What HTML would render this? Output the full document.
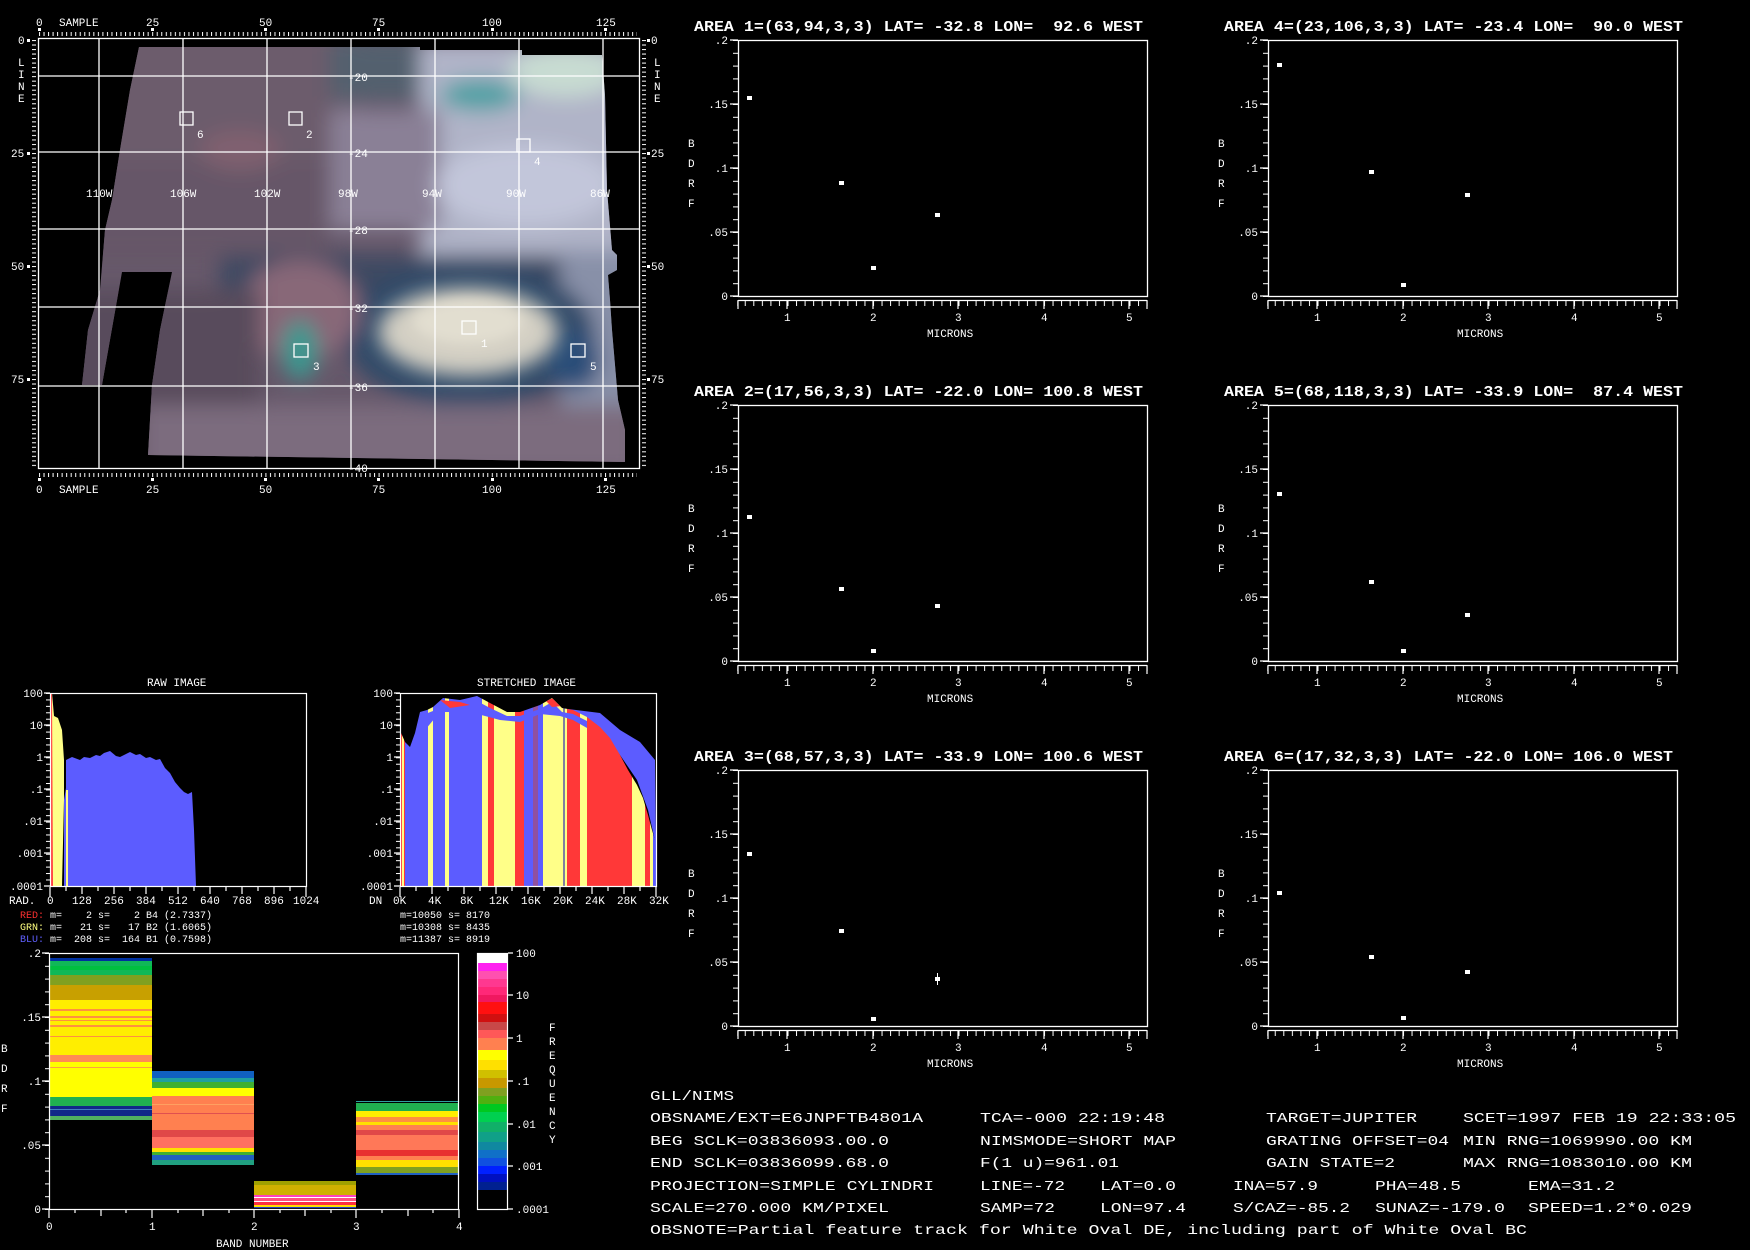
<!DOCTYPE html>
<html><head><meta charset="utf-8"><style>
html,body{margin:0;padding:0;background:#000;}
svg{display:block;}
text{font-family:"Liberation Mono",monospace;fill:#fff;white-space:pre;}
.s{font-size:11px;}
.t{font-size:15px;font-weight:bold;}
.b{font-size:13px;}
</style></head><body>
<svg width="1750" height="1250" viewBox="0 0 1750 1250" xmlns="http://www.w3.org/2000/svg">
<defs>
<pattern id="tkx" x="39" y="0" width="4.528" height="10" patternUnits="userSpaceOnUse"><rect x="0" y="0" width="1" height="10" fill="#fff"/></pattern>
<pattern id="tky" x="0" y="40" width="10" height="4.52" patternUnits="userSpaceOnUse"><rect x="0" y="0" width="10" height="1" fill="#fff"/></pattern>
<pattern id="pty" x="0" y="40" width="10" height="12.8" patternUnits="userSpaceOnUse"><rect x="0" y="0" width="10" height="1" fill="#fff"/></pattern>
<pattern id="ptx" x="702" y="0" width="8.55" height="10" patternUnits="userSpaceOnUse"><rect x="0" y="0" width="1" height="10" fill="#fff"/></pattern>
<pattern id="hty" x="0" y="693" width="10" height="6.43" patternUnits="userSpaceOnUse"><rect x="0" y="0" width="10" height="1" fill="#fff"/></pattern>
<pattern id="bty" x="0" y="953" width="10" height="12.8" patternUnits="userSpaceOnUse"><rect x="0" y="0" width="10" height="1" fill="#fff"/></pattern>
<filter id="bl" filterUnits="userSpaceOnUse" x="0" y="0" width="700" height="520"><feGaussianBlur stdDeviation="10"/></filter>
<filter id="bl2" filterUnits="userSpaceOnUse" x="0" y="0" width="700" height="520"><feGaussianBlur stdDeviation="6"/></filter>
<clipPath id="mapclip"><polygon points="139,47 420,47 420,50 522,50 522,55 602,55 605,95 607,190 612,250 617,255 617,270 608,275 610,300 612,330 618,400 625,430 625,462 148,455 152,385 160,330 172,272 122,272 102,385 82,385 88,330 100,290 105,230 112,200 120,150 130,90"/></clipPath>
<clipPath id="envclip"><polygon points="400,693 401,733 405,742 410,747 415,733 420,712 427,710 433,707 443,698 460,700 477,696 490,703 507,712 520,712 540,705 552,698 562,708 573,710 587,717 600,727 610,738 620,755 628,770 637,785 643,798 648,815 652,830 655,840 657,815 657,887 400,887"/></clipPath>
</defs>
<rect width="1750" height="1250" fill="#000"/>

<!-- ===== MAP ===== -->
<g clip-path="url(#mapclip)">
 <rect x="70" y="40" width="570" height="430" fill="#66586a"/>
 <g filter="url(#bl)">
  <rect x="60" y="30" width="300" height="130" fill="#6c5c6c"/>
  <rect x="330" y="40" width="130" height="60" fill="#52606e"/>
  <rect x="420" y="40" width="220" height="230" fill="#b0b4c8"/>
  <ellipse cx="565" cy="72" rx="55" ry="25" fill="#c8dcd2"/>
  <ellipse cx="480" cy="95" rx="40" ry="16" fill="#50a0a4"/>
  <rect x="330" y="110" width="110" height="120" fill="#8a8096"/>
  <ellipse cx="525" cy="185" rx="90" ry="40" fill="#c2c6da"/>
  <rect x="60" y="160" width="270" height="100" fill="#665668"/>
  <ellipse cx="240" cy="150" rx="40" ry="20" fill="#806070"/>
  <rect x="220" y="255" width="420" height="40" fill="#3c4a62"/>
  <rect x="560" y="250" width="80" height="220" fill="#8890a8"/>
  <ellipse cx="470" cy="335" rx="125" ry="72" fill="#2e4868"/>
  <ellipse cx="300" cy="310" rx="60" ry="50" fill="#886878"/>
  <ellipse cx="300" cy="350" rx="18" ry="30" fill="#3a9890"/>
  <rect x="60" y="290" width="200" height="180" fill="#584c5c"/>
  <rect x="140" y="405" width="500" height="70" fill="#7c6c7e"/>
  <ellipse cx="575" cy="360" rx="25" ry="30" fill="#2a4e78"/>
 </g>
 <ellipse cx="468" cy="332" rx="90" ry="44" fill="#d4d0c4" filter="url(#bl)"/>
 <ellipse cx="468" cy="322" rx="55" ry="22" fill="#e2ded0" filter="url(#bl2)"/>
</g>
<!-- grid -->
<g stroke="#fff" stroke-width="1.3" fill="none">
 <rect x="38.5" y="38.5" width="601" height="430"/>
 <path d="M99 38V468M183 38V468M267 38V468M351 38V468M435 38V468M519 38V468M603 38V468M38 76H640M38 152H640M38 229H640M38 307H640M38 386H640"/>
 <rect x="180" y="112" width="13" height="13"/>
 <rect x="289" y="112" width="13" height="13"/>
 <rect x="517" y="139" width="13" height="13"/>
 <rect x="462" y="321" width="14" height="13"/>
 <rect x="294" y="344" width="14" height="13"/>
 <rect x="571" y="344" width="14" height="13"/>
</g>
<!-- rulers -->
<rect x="39" y="32" width="598" height="4" fill="url(#tkx)"/>
<rect x="39" y="473" width="598" height="4" fill="url(#tkx)"/>
<rect x="32" y="40" width="4" height="428" fill="url(#tky)"/>
<rect x="642" y="40" width="4" height="428" fill="url(#tky)"/>
<g fill="#fff">
 <rect x="38" y="28" width="3" height="3"/><rect x="151" y="28" width="3" height="3"/><rect x="264" y="28" width="3" height="3"/><rect x="377" y="28" width="3" height="3"/><rect x="491" y="28" width="3" height="3"/><rect x="604" y="28" width="3" height="3"/>
 <rect x="38" y="478" width="3" height="3"/><rect x="151" y="478" width="3" height="3"/><rect x="264" y="478" width="3" height="3"/><rect x="377" y="478" width="3" height="3"/><rect x="491" y="478" width="3" height="3"/><rect x="604" y="478" width="3" height="3"/>
 <rect x="27" y="39" width="3" height="3"/><rect x="27" y="152" width="3" height="3"/><rect x="27" y="265" width="3" height="3"/><rect x="27" y="378" width="3" height="3"/>
 <rect x="647" y="39" width="3" height="3"/><rect x="647" y="152" width="3" height="3"/><rect x="647" y="265" width="3" height="3"/><rect x="647" y="378" width="3" height="3"/>
</g>
<g class="s">
 <text x="36" y="26">0</text><text x="59" y="26">SAMPLE</text><text x="146" y="26">25</text><text x="259" y="26">50</text><text x="372" y="26">75</text><text x="482" y="26">100</text><text x="596" y="26">125</text>
 <text x="36" y="493">0</text><text x="59" y="493">SAMPLE</text><text x="146" y="493">25</text><text x="259" y="493">50</text><text x="372" y="493">75</text><text x="482" y="493">100</text><text x="596" y="493">125</text>
 <text x="18" y="44">0</text><text x="11" y="157">25</text><text x="11" y="270">50</text><text x="11" y="383">75</text>
 <text x="18" y="66">L</text><text x="18" y="78">I</text><text x="18" y="90">N</text><text x="18" y="102">E</text>
 <text x="651" y="44">0</text><text x="651" y="157">25</text><text x="651" y="270">50</text><text x="651" y="383">75</text>
 <text x="654" y="66">L</text><text x="654" y="78">I</text><text x="654" y="90">N</text><text x="654" y="102">E</text>
 <text x="348" y="81">-20</text><text x="348" y="157">-24</text><text x="348" y="234">-28</text><text x="348" y="312">-32</text><text x="348" y="391">-36</text><text x="348" y="472">-40</text>
 <text x="86" y="197">110W</text><text x="170" y="197">106W</text><text x="254" y="197">102W</text><text x="338" y="197">98W</text><text x="422" y="197">94W</text><text x="506" y="197">90W</text><text x="590" y="197">86W</text>
 <text x="197" y="138">6</text><text x="306" y="138">2</text><text x="534" y="165">4</text><text x="481" y="347">1</text><text x="313" y="370">3</text><text x="590" y="370">5</text>
</g>

<!-- ===== AREA PLOTS ===== -->
<g>
 <rect x="738.5" y="40.5" width="409" height="256" fill="none" stroke="#fff" stroke-width="1.3"/>
 <rect x="733" y="40" width="5" height="257" fill="url(#pty)"/>
 <path d="M730 40H738M730 104H738M730 168H738M730 232H738M730 296H738M738 300.5H1147" stroke="#fff" stroke-width="1.2"/>
 <rect x="737" y="301" width="411" height="5" fill="url(#ptx)"/>
 <path d="M787 300V309M873 300V309M958 300V309M1044 300V309M1129 300V309M738 300V309M1147 300V309" stroke="#fff" stroke-width="1.2"/>
 <g class="s">
  <text x="728" y="44" text-anchor="end">.2</text><text x="728" y="108" text-anchor="end">.15</text><text x="728" y="172" text-anchor="end">.1</text><text x="728" y="236" text-anchor="end">.05</text><text x="728" y="300" text-anchor="end">0</text>
  <text x="688" y="147">B</text><text x="688" y="167">D</text><text x="688" y="187">R</text><text x="688" y="207">F</text>
  <text x="784" y="321">1</text><text x="870" y="321">2</text><text x="955" y="321">3</text><text x="1041" y="321">4</text><text x="1126" y="321">5</text>
  <text x="927" y="337">MICRONS</text>
 </g>
</g>
<g transform="translate(530,0)">
 <rect x="738.5" y="40.5" width="409" height="256" fill="none" stroke="#fff" stroke-width="1.3"/>
 <rect x="733" y="40" width="5" height="257" fill="url(#pty)"/>
 <path d="M730 40H738M730 104H738M730 168H738M730 232H738M730 296H738M738 300.5H1147" stroke="#fff" stroke-width="1.2"/>
 <rect x="737" y="301" width="411" height="5" fill="url(#ptx)"/>
 <path d="M787 300V309M873 300V309M958 300V309M1044 300V309M1129 300V309M738 300V309M1147 300V309" stroke="#fff" stroke-width="1.2"/>
 <g class="s">
  <text x="728" y="44" text-anchor="end">.2</text><text x="728" y="108" text-anchor="end">.15</text><text x="728" y="172" text-anchor="end">.1</text><text x="728" y="236" text-anchor="end">.05</text><text x="728" y="300" text-anchor="end">0</text>
  <text x="688" y="147">B</text><text x="688" y="167">D</text><text x="688" y="187">R</text><text x="688" y="207">F</text>
  <text x="784" y="321">1</text><text x="870" y="321">2</text><text x="955" y="321">3</text><text x="1041" y="321">4</text><text x="1126" y="321">5</text>
  <text x="927" y="337">MICRONS</text>
 </g>
</g>
<g transform="translate(0,365)">
 <rect x="738.5" y="40.5" width="409" height="256" fill="none" stroke="#fff" stroke-width="1.3"/>
 <rect x="733" y="40" width="5" height="257" fill="url(#pty)"/>
 <path d="M730 40H738M730 104H738M730 168H738M730 232H738M730 296H738M738 300.5H1147" stroke="#fff" stroke-width="1.2"/>
 <rect x="737" y="301" width="411" height="5" fill="url(#ptx)"/>
 <path d="M787 300V309M873 300V309M958 300V309M1044 300V309M1129 300V309M738 300V309M1147 300V309" stroke="#fff" stroke-width="1.2"/>
 <g class="s">
  <text x="728" y="44" text-anchor="end">.2</text><text x="728" y="108" text-anchor="end">.15</text><text x="728" y="172" text-anchor="end">.1</text><text x="728" y="236" text-anchor="end">.05</text><text x="728" y="300" text-anchor="end">0</text>
  <text x="688" y="147">B</text><text x="688" y="167">D</text><text x="688" y="187">R</text><text x="688" y="207">F</text>
  <text x="784" y="321">1</text><text x="870" y="321">2</text><text x="955" y="321">3</text><text x="1041" y="321">4</text><text x="1126" y="321">5</text>
  <text x="927" y="337">MICRONS</text>
 </g>
</g>
<g transform="translate(530,365)">
 <rect x="738.5" y="40.5" width="409" height="256" fill="none" stroke="#fff" stroke-width="1.3"/>
 <rect x="733" y="40" width="5" height="257" fill="url(#pty)"/>
 <path d="M730 40H738M730 104H738M730 168H738M730 232H738M730 296H738M738 300.5H1147" stroke="#fff" stroke-width="1.2"/>
 <rect x="737" y="301" width="411" height="5" fill="url(#ptx)"/>
 <path d="M787 300V309M873 300V309M958 300V309M1044 300V309M1129 300V309M738 300V309M1147 300V309" stroke="#fff" stroke-width="1.2"/>
 <g class="s">
  <text x="728" y="44" text-anchor="end">.2</text><text x="728" y="108" text-anchor="end">.15</text><text x="728" y="172" text-anchor="end">.1</text><text x="728" y="236" text-anchor="end">.05</text><text x="728" y="300" text-anchor="end">0</text>
  <text x="688" y="147">B</text><text x="688" y="167">D</text><text x="688" y="187">R</text><text x="688" y="207">F</text>
  <text x="784" y="321">1</text><text x="870" y="321">2</text><text x="955" y="321">3</text><text x="1041" y="321">4</text><text x="1126" y="321">5</text>
  <text x="927" y="337">MICRONS</text>
 </g>
</g>
<g transform="translate(0,730)">
 <rect x="738.5" y="40.5" width="409" height="256" fill="none" stroke="#fff" stroke-width="1.3"/>
 <rect x="733" y="40" width="5" height="257" fill="url(#pty)"/>
 <path d="M730 40H738M730 104H738M730 168H738M730 232H738M730 296H738M738 300.5H1147" stroke="#fff" stroke-width="1.2"/>
 <rect x="737" y="301" width="411" height="5" fill="url(#ptx)"/>
 <path d="M787 300V309M873 300V309M958 300V309M1044 300V309M1129 300V309M738 300V309M1147 300V309" stroke="#fff" stroke-width="1.2"/>
 <g class="s">
  <text x="728" y="44" text-anchor="end">.2</text><text x="728" y="108" text-anchor="end">.15</text><text x="728" y="172" text-anchor="end">.1</text><text x="728" y="236" text-anchor="end">.05</text><text x="728" y="300" text-anchor="end">0</text>
  <text x="688" y="147">B</text><text x="688" y="167">D</text><text x="688" y="187">R</text><text x="688" y="207">F</text>
  <text x="784" y="321">1</text><text x="870" y="321">2</text><text x="955" y="321">3</text><text x="1041" y="321">4</text><text x="1126" y="321">5</text>
  <text x="927" y="337">MICRONS</text>
 </g>
</g>
<g transform="translate(530,730)">
 <rect x="738.5" y="40.5" width="409" height="256" fill="none" stroke="#fff" stroke-width="1.3"/>
 <rect x="733" y="40" width="5" height="257" fill="url(#pty)"/>
 <path d="M730 40H738M730 104H738M730 168H738M730 232H738M730 296H738M738 300.5H1147" stroke="#fff" stroke-width="1.2"/>
 <rect x="737" y="301" width="411" height="5" fill="url(#ptx)"/>
 <path d="M787 300V309M873 300V309M958 300V309M1044 300V309M1129 300V309M738 300V309M1147 300V309" stroke="#fff" stroke-width="1.2"/>
 <g class="s">
  <text x="728" y="44" text-anchor="end">.2</text><text x="728" y="108" text-anchor="end">.15</text><text x="728" y="172" text-anchor="end">.1</text><text x="728" y="236" text-anchor="end">.05</text><text x="728" y="300" text-anchor="end">0</text>
  <text x="688" y="147">B</text><text x="688" y="167">D</text><text x="688" y="187">R</text><text x="688" y="207">F</text>
  <text x="784" y="321">1</text><text x="870" y="321">2</text><text x="955" y="321">3</text><text x="1041" y="321">4</text><text x="1126" y="321">5</text>
  <text x="927" y="337">MICRONS</text>
 </g>
</g>
<!-- titles -->
<g class="t">
 <text x="694" y="31" textLength="449" lengthAdjust="spacingAndGlyphs">AREA 1=(63,94,3,3) LAT= -32.8 LON=  92.6 WEST</text>
 <text x="1224" y="31" textLength="459" lengthAdjust="spacingAndGlyphs">AREA 4=(23,106,3,3) LAT= -23.4 LON=  90.0 WEST</text>
 <text x="694" y="396" textLength="449" lengthAdjust="spacingAndGlyphs">AREA 2=(17,56,3,3) LAT= -22.0 LON= 100.8 WEST</text>
 <text x="1224" y="396" textLength="459" lengthAdjust="spacingAndGlyphs">AREA 5=(68,118,3,3) LAT= -33.9 LON=  87.4 WEST</text>
 <text x="694" y="761" textLength="449" lengthAdjust="spacingAndGlyphs">AREA 3=(68,57,3,3) LAT= -33.9 LON= 100.6 WEST</text>
 <text x="1224" y="761" textLength="449" lengthAdjust="spacingAndGlyphs">AREA 6=(17,32,3,3) LAT= -22.0 LON= 106.0 WEST</text>
</g>
<!-- points -->
<g fill="#fff">
 <rect x="747" y="96" width="5" height="4"/><rect x="839" y="181" width="5" height="4"/><rect x="871" y="266" width="5" height="4"/><rect x="935" y="213" width="5" height="4"/>
 <rect x="1277" y="63" width="5" height="4"/><rect x="1369" y="170" width="5" height="4"/><rect x="1401" y="283" width="5" height="4"/><rect x="1465" y="193" width="5" height="4"/>
 <rect x="747" y="515" width="5" height="4"/><rect x="839" y="587" width="5" height="4"/><rect x="871" y="649" width="5" height="4"/><rect x="935" y="604" width="5" height="4"/>
 <rect x="1277" y="492" width="5" height="4"/><rect x="1369" y="580" width="5" height="4"/><rect x="1401" y="649" width="5" height="4"/><rect x="1465" y="613" width="5" height="4"/>
 <rect x="747" y="852" width="5" height="4"/><rect x="839" y="929" width="5" height="4"/><rect x="871" y="1017" width="5" height="4"/><rect x="935" y="977" width="5" height="4"/><rect x="937" y="973" width="1" height="12"/>
 <rect x="1277" y="891" width="5" height="4"/><rect x="1369" y="955" width="5" height="4"/><rect x="1401" y="1016" width="5" height="4"/><rect x="1465" y="970" width="5" height="4"/>
</g>

<!-- ===== HISTOGRAMS ===== -->
<text class="s" x="147" y="686">RAW IMAGE</text>
<text class="s" x="477" y="686">STRETCHED IMAGE</text>
<polygon points="64,886 64,800 66,788 66,760 72,757 80,760 84,757 90,758 96,755 100,756 104,753 110,751 116,756 120,757 126,754 130,752 136,755 140,754 146,758 150,757 156,760 160,759 165,768 170,773 175,782 180,788 184,792 188,794 192,792 194,830 196,886" fill="#5c5cff"/>
<polygon points="50,886 50,700 52,693 54,716 58,718 62,730 64,760 64,800 62,886" fill="#ffff88"/>
<polygon points="51,886 51,693 52,693 53,886" fill="#ff4040"/>
<rect x="66" y="790" width="2" height="96" fill="#ffff88"/>
<polygon points="560,708 600,713 620,730 640,742 655,760 656,845 648,810 637,780 620,755 600,730 560,712" fill="#5c5cff"/>
<g clip-path="url(#envclip)">
 <rect x="400" y="690" width="5" height="200" fill="#ff3838"/>
 <rect x="402" y="690" width="2" height="200" fill="#ffff88"/>
 <rect x="405" y="690" width="23" height="200" fill="#5c5cff"/>
 <rect x="428" y="690" width="5" height="200" fill="#ffff88"/>
 <rect x="433" y="690" width="12" height="200" fill="#5c5cff"/>
 <rect x="445" y="690" width="4" height="200" fill="#ffff88"/>
 <rect x="449" y="690" width="33" height="200" fill="#5c5cff"/>
 <rect x="482" y="690" width="6" height="200" fill="#ffff88"/>
 <rect x="488" y="690" width="6" height="200" fill="#ff3838"/>
 <rect x="494" y="690" width="21" height="200" fill="#ffff88"/>
 <rect x="515" y="690" width="9" height="200" fill="#ff3838"/>
 <rect x="524" y="690" width="9" height="200" fill="#5c5cff"/>
 <rect x="533" y="690" width="5" height="200" fill="#9050a0"/>
 <rect x="538" y="690" width="5" height="200" fill="#5c5cff"/>
 <rect x="543" y="690" width="20" height="200" fill="#ffff88"/>
 <rect x="563" y="690" width="2" height="200" fill="#8080a0"/>
 <rect x="565" y="690" width="2" height="200" fill="#ffff88"/>
 <rect x="567" y="690" width="13" height="200" fill="#ff3838"/>
 <rect x="580" y="690" width="7" height="200" fill="#ffff88"/>
 <rect x="587" y="690" width="45" height="200" fill="#ff3838"/>
 <rect x="632" y="690" width="13" height="200" fill="#ffff88"/>
 <rect x="645" y="690" width="5" height="200" fill="#ff3838"/>
 <rect x="650" y="690" width="3" height="200" fill="#ffff88"/>
 <rect x="653" y="690" width="4" height="200" fill="#5c5cff"/>
 <polygon points="420,716 433,711 443,703 460,705 477,701 490,708 507,716 520,716 540,709 552,702 562,712 573,714 587,721 587,728 573,720 560,716 540,714 520,722 500,720 470,712 440,712 425,730" fill="#5c5cff"/>
 <polygon points="440,700 460,702 470,705 450,708" fill="#ff3838"/>
 <polygon points="545,700 555,698 562,706 552,707" fill="#ff3838"/>
</g>
<g stroke="#fff" stroke-width="1.2" fill="none">
 <rect x="50.5" y="693.5" width="256" height="193"/>
 <rect x="400.5" y="693.5" width="256" height="193"/>
 <path d="M44 693H50M44 725H50M44 757H50M44 789H50M44 821H50M44 853H50M44 886H50M394 693H400M394 725H400M394 757H400M394 789H400M394 821H400M394 853H400M394 886H400"/>
 <path d="M50 887V897M82 887V894M114 887V894M146 887V894M178 887V894M210 887V894M242 887V894M274 887V894M306 887V897M400 887V897M432 887V894M464 887V894M496 887V894M528 887V894M560 887V894M592 887V894M624 887V894M656 887V897"/>
 <path d="M66 887V891M98 887V891M130 887V891M162 887V891M194 887V891M226 887V891M258 887V891M290 887V891M416 887V891M448 887V891M480 887V891M512 887V891M544 887V891M576 887V891M608 887V891M640 887V891"/>
</g>
<rect x="46" y="693" width="4" height="193" fill="url(#hty)"/>
<rect x="396" y="693" width="4" height="193" fill="url(#hty)"/>
<g class="s">
 <text x="43" y="697" text-anchor="end">100</text><text x="43" y="729" text-anchor="end">10</text><text x="43" y="761" text-anchor="end">1</text><text x="43" y="793" text-anchor="end">.1</text><text x="43" y="825" text-anchor="end">.01</text><text x="43" y="857" text-anchor="end">.001</text><text x="43" y="890" text-anchor="end">.0001</text>
 <text x="393" y="697" text-anchor="end">100</text><text x="393" y="729" text-anchor="end">10</text><text x="393" y="761" text-anchor="end">1</text><text x="393" y="793" text-anchor="end">.1</text><text x="393" y="825" text-anchor="end">.01</text><text x="393" y="857" text-anchor="end">.001</text><text x="393" y="890" text-anchor="end">.0001</text>
 <text x="9" y="904">RAD.</text><text x="47" y="904">0</text><text x="72" y="904">128</text><text x="104" y="904">256</text><text x="136" y="904">384</text><text x="168" y="904">512</text><text x="200" y="904">640</text><text x="232" y="904">768</text><text x="264" y="904">896</text><text x="293" y="904">1024</text>
 <text x="369" y="904">DN</text><text x="393" y="904">0K</text><text x="428" y="904">4K</text><text x="460" y="904">8K</text><text x="489" y="904">12K</text><text x="521" y="904">16K</text><text x="553" y="904">20K</text><text x="585" y="904">24K</text><text x="617" y="904">28K</text><text x="649" y="904">32K</text>
</g>
<g style="font-size:10px">
 <text x="20" y="918"><tspan fill="#ff3030">RED:</tspan> m=    2 s=    2 B4 (2.7337)</text>
 <text x="20" y="930"><tspan fill="#ffff80">GRN:</tspan> m=   21 s=   17 B2 (1.6065)</text>
 <text x="20" y="942"><tspan fill="#6060ff">BLU:</tspan> m=  208 s=  164 B1 (0.7598)</text>
 <text x="400" y="918">m=10050 s= 8170</text>
 <text x="400" y="930">m=10308 s= 8435</text>
 <text x="400" y="942">m=11387 s= 8919</text>
</g>

<!-- ===== BAND PLOT ===== -->
<g>
 <rect x="49" y="958" width="103" height="3" fill="#0030a0"/>
 <rect x="49" y="961" width="103" height="14" fill="#10b858"/>
 <rect x="49" y="966" width="103" height="4" fill="#00c040"/>
 <rect x="49" y="975" width="103" height="10" fill="#80a020"/>
 <rect x="49" y="985" width="103" height="15" fill="#c8a000"/>
 <rect x="49" y="1000" width="103" height="55" fill="#ffee00"/>
 <rect x="49" y="1009" width="103" height="2" fill="#ff9040"/>
 <rect x="49" y="1016" width="103" height="2" fill="#ff9040"/>
 <rect x="49" y="1020" width="103" height="1" fill="#ff9040"/>
 <rect x="49" y="1025" width="103" height="2" fill="#ff9040"/>
 <rect x="49" y="1036" width="103" height="1" fill="#ff9040"/>
 <rect x="49" y="1055" width="103" height="7" fill="#ff8a55"/>
 <rect x="49" y="1062" width="103" height="35" fill="#ffff00"/>
 <rect x="49" y="1067" width="103" height="1" fill="#ffa040"/>
 <rect x="49" y="1097" width="103" height="9" fill="#20b050"/>
 <rect x="49" y="1106" width="103" height="10" fill="#102888"/>
 <rect x="49" y="1109" width="103" height="1" fill="#4080c0"/>
 <rect x="49" y="1116" width="103" height="4" fill="#50b060"/>

 <rect x="152" y="1071" width="102" height="7" fill="#1060c0"/>
 <rect x="152" y="1078" width="102" height="4" fill="#20a0a0"/>
 <rect x="152" y="1082" width="102" height="6" fill="#40b030"/>
 <rect x="152" y="1088" width="102" height="8" fill="#ffff00"/>
 <rect x="152" y="1096" width="102" height="34" fill="#ff8050"/>
 <rect x="152" y="1104" width="102" height="1" fill="#ffa060"/>
 <rect x="152" y="1113" width="102" height="1" fill="#e05050"/>
 <rect x="152" y="1130" width="102" height="7" fill="#e04848"/>
 <rect x="152" y="1137" width="102" height="11" fill="#ff7060"/>
 <rect x="152" y="1148" width="102" height="4" fill="#ffe000"/>
 <rect x="152" y="1152" width="102" height="3" fill="#40b030"/>
 <rect x="152" y="1155" width="102" height="5" fill="#2060c0"/>
 <rect x="152" y="1160" width="102" height="5" fill="#20a080"/>

 <rect x="254" y="1181" width="102" height="4" fill="#a0a000"/>
 <rect x="254" y="1185" width="102" height="10" fill="#d0b000"/>
 <rect x="254" y="1195" width="102" height="2" fill="#ff40c0"/>
 <rect x="254" y="1197" width="102" height="1" fill="#ffffff"/>
 <rect x="254" y="1198" width="102" height="3" fill="#ff5080"/>
 <rect x="254" y="1201" width="102" height="1" fill="#ffffff"/>
 <rect x="254" y="1202" width="102" height="3" fill="#ff3040"/>
 <rect x="254" y="1205" width="102" height="2" fill="#ffe000"/>
 <rect x="254" y="1207" width="102" height="1" fill="#2040c0"/>

 <rect x="356" y="1101" width="103" height="1" fill="#30a0a0"/>
 <rect x="356" y="1103" width="103" height="8" fill="#20b050"/>
 <rect x="356" y="1111" width="103" height="6" fill="#ffee00"/>
 <rect x="356" y="1117" width="103" height="5" fill="#ff9040"/>
 <rect x="356" y="1122" width="103" height="3" fill="#ffe000"/>
 <rect x="356" y="1125" width="103" height="5" fill="#ff8050"/>
 <rect x="356" y="1130" width="103" height="5" fill="#e04848"/>
 <rect x="356" y="1135" width="103" height="15" fill="#ff7858"/>
 <rect x="356" y="1150" width="103" height="6" fill="#e83030"/>
 <rect x="356" y="1156" width="103" height="4" fill="#ff8050"/>
 <rect x="356" y="1160" width="103" height="7" fill="#ffe000"/>
 <rect x="356" y="1167" width="103" height="6" fill="#80a020"/>
 <rect x="356" y="1173" width="103" height="2" fill="#2060c0"/>
</g>
<g stroke="#fff" stroke-width="1.2" fill="none">
 <rect x="49.5" y="953.5" width="409" height="256"/>
 <path d="M42 953H49M42 1017H49M42 1081H49M42 1145H49M42 1209H49"/>
 <path d="M49 1209V1218M152 1209V1218M254 1209V1218M356 1209V1218M459 1209V1218M75 1209V1213M101 1209V1216M126 1209V1213M178 1209V1213M203 1209V1216M229 1209V1213M280 1209V1213M305 1209V1216M331 1209V1213M382 1209V1213M408 1209V1216M433 1209V1213"/>
 <path d="M508 953H513M508 995H513M508 1038H513M508 1081H513M508 1124H513M508 1166H513M508 1209H513"/>
</g>
<rect x="45" y="953" width="4" height="257" fill="url(#bty)"/>
<g>
 <rect x="477" y="953" width="31" height="10" fill="#ffffff"/>
 <rect x="477" y="963" width="31" height="8" fill="#ff20f0"/>
 <rect x="477" y="971" width="31" height="8" fill="#ff50b0"/>
 <rect x="477" y="979" width="31" height="8" fill="#ff3890"/>
 <rect x="477" y="987" width="31" height="8" fill="#ff2878"/>
 <rect x="477" y="995" width="31" height="7" fill="#f01860"/>
 <rect x="477" y="1002" width="31" height="12" fill="#ff1010"/>
 <rect x="477" y="1014" width="31" height="8" fill="#d01010"/>
 <rect x="477" y="1022" width="31" height="8" fill="#c84848"/>
 <rect x="477" y="1030" width="31" height="8" fill="#ff5858"/>
 <rect x="477" y="1038" width="31" height="12" fill="#ff8050"/>
 <rect x="477" y="1050" width="31" height="10" fill="#ffff00"/>
 <rect x="477" y="1060" width="31" height="10" fill="#ffe000"/>
 <rect x="477" y="1070" width="31" height="8" fill="#d0c000"/>
 <rect x="477" y="1078" width="31" height="10" fill="#c89800"/>
 <rect x="477" y="1088" width="31" height="8" fill="#80a020"/>
 <rect x="477" y="1096" width="31" height="8" fill="#50b010"/>
 <rect x="477" y="1104" width="31" height="8" fill="#00c820"/>
 <rect x="477" y="1112" width="31" height="10" fill="#00d050"/>
 <rect x="477" y="1122" width="31" height="10" fill="#10b068"/>
 <rect x="477" y="1132" width="31" height="10" fill="#10a088"/>
 <rect x="477" y="1142" width="31" height="8" fill="#1088a0"/>
 <rect x="477" y="1150" width="31" height="8" fill="#1070c8"/>
 <rect x="477" y="1158" width="31" height="8" fill="#1050e0"/>
 <rect x="477" y="1166" width="31" height="8" fill="#0020ff"/>
 <rect x="477" y="1174" width="31" height="8" fill="#0010c0"/>
 <rect x="477" y="1182" width="31" height="8" fill="#002090"/>
 <rect x="477.5" y="953.5" width="30" height="256" fill="none" stroke="#fff" stroke-width="1.2"/>
</g>
<g class="s">
 <text x="41" y="957" text-anchor="end">.2</text><text x="41" y="1021" text-anchor="end">.15</text><text x="41" y="1085" text-anchor="end">.1</text><text x="41" y="1149" text-anchor="end">.05</text><text x="41" y="1213" text-anchor="end">0</text>
 <text x="1" y="1052">B</text><text x="1" y="1072">D</text><text x="1" y="1092">R</text><text x="1" y="1112">F</text>
 <text x="46" y="1230">0</text><text x="149" y="1230">1</text><text x="251" y="1230">2</text><text x="353" y="1230">3</text><text x="456" y="1230">4</text>
 <text x="216" y="1247">BAND NUMBER</text>
 <text x="516" y="957">100</text><text x="516" y="999">10</text><text x="516" y="1042">1</text><text x="516" y="1085">.1</text><text x="516" y="1128">.01</text><text x="516" y="1170">.001</text><text x="516" y="1213">.0001</text>
 <text x="549" y="1031">F</text><text x="549" y="1045">R</text><text x="549" y="1059">E</text><text x="549" y="1073">Q</text><text x="549" y="1087">U</text><text x="549" y="1101">E</text><text x="549" y="1115">N</text><text x="549" y="1129">C</text><text x="549" y="1143">Y</text>
</g>

<!-- ===== BOTTOM TEXT ===== -->
<g class="b" style="font-size:14px">
 <text x="650" y="1100" textLength="84" lengthAdjust="spacingAndGlyphs">GLL/NIMS</text>
 <text x="650" y="1122" textLength="273" lengthAdjust="spacingAndGlyphs">OBSNAME/EXT=E6JNPFTB4801A</text>
 <text x="980" y="1122" textLength="185" lengthAdjust="spacingAndGlyphs">TCA=-000 22:19:48</text>
 <text x="1266" y="1122" textLength="151" lengthAdjust="spacingAndGlyphs">TARGET=JUPITER</text>
 <text x="1463" y="1122" textLength="273" lengthAdjust="spacingAndGlyphs">SCET=1997 FEB 19 22:33:05</text>
 <text x="650" y="1145" textLength="239" lengthAdjust="spacingAndGlyphs">BEG SCLK=03836093.00.0</text>
 <text x="980" y="1145" textLength="196" lengthAdjust="spacingAndGlyphs">NIMSMODE=SHORT MAP</text>
 <text x="1266" y="1145" textLength="183" lengthAdjust="spacingAndGlyphs">GRATING OFFSET=04</text>
 <text x="1463" y="1145" textLength="229" lengthAdjust="spacingAndGlyphs">MIN RNG=1069990.00 KM</text>
 <text x="650" y="1167" textLength="239" lengthAdjust="spacingAndGlyphs">END SCLK=03836099.68.0</text>
 <text x="980" y="1167" textLength="139" lengthAdjust="spacingAndGlyphs">F(1 u)=961.01</text>
 <text x="1266" y="1167" textLength="129" lengthAdjust="spacingAndGlyphs">GAIN STATE=2</text>
 <text x="1463" y="1167" textLength="229" lengthAdjust="spacingAndGlyphs">MAX RNG=1083010.00 KM</text>
 <text x="650" y="1190" textLength="284" lengthAdjust="spacingAndGlyphs">PROJECTION=SIMPLE CYLINDRI</text>
 <text x="980" y="1190" textLength="85" lengthAdjust="spacingAndGlyphs">LINE=-72</text>
 <text x="1100" y="1190" textLength="76" lengthAdjust="spacingAndGlyphs">LAT=0.0</text>
 <text x="1233" y="1190" textLength="85" lengthAdjust="spacingAndGlyphs">INA=57.9</text>
 <text x="1375" y="1190" textLength="86" lengthAdjust="spacingAndGlyphs">PHA=48.5</text>
 <text x="1528" y="1190" textLength="87" lengthAdjust="spacingAndGlyphs">EMA=31.2</text>
 <text x="650" y="1212" textLength="239" lengthAdjust="spacingAndGlyphs">SCALE=270.000 KM/PIXEL</text>
 <text x="980" y="1212" textLength="75" lengthAdjust="spacingAndGlyphs">SAMP=72</text>
 <text x="1100" y="1212" textLength="86" lengthAdjust="spacingAndGlyphs">LON=97.4</text>
 <text x="1233" y="1212" textLength="117" lengthAdjust="spacingAndGlyphs">S/CAZ=-85.2</text>
 <text x="1375" y="1212" textLength="130" lengthAdjust="spacingAndGlyphs">SUNAZ=-179.0</text>
 <text x="1528" y="1212" textLength="164" lengthAdjust="spacingAndGlyphs">SPEED=1.2*0.029</text>
 <text x="650" y="1234" textLength="877" lengthAdjust="spacingAndGlyphs">OBSNOTE=Partial feature track for White Oval DE, including part of White Oval BC</text>
</g>
</svg>
</body></html>
